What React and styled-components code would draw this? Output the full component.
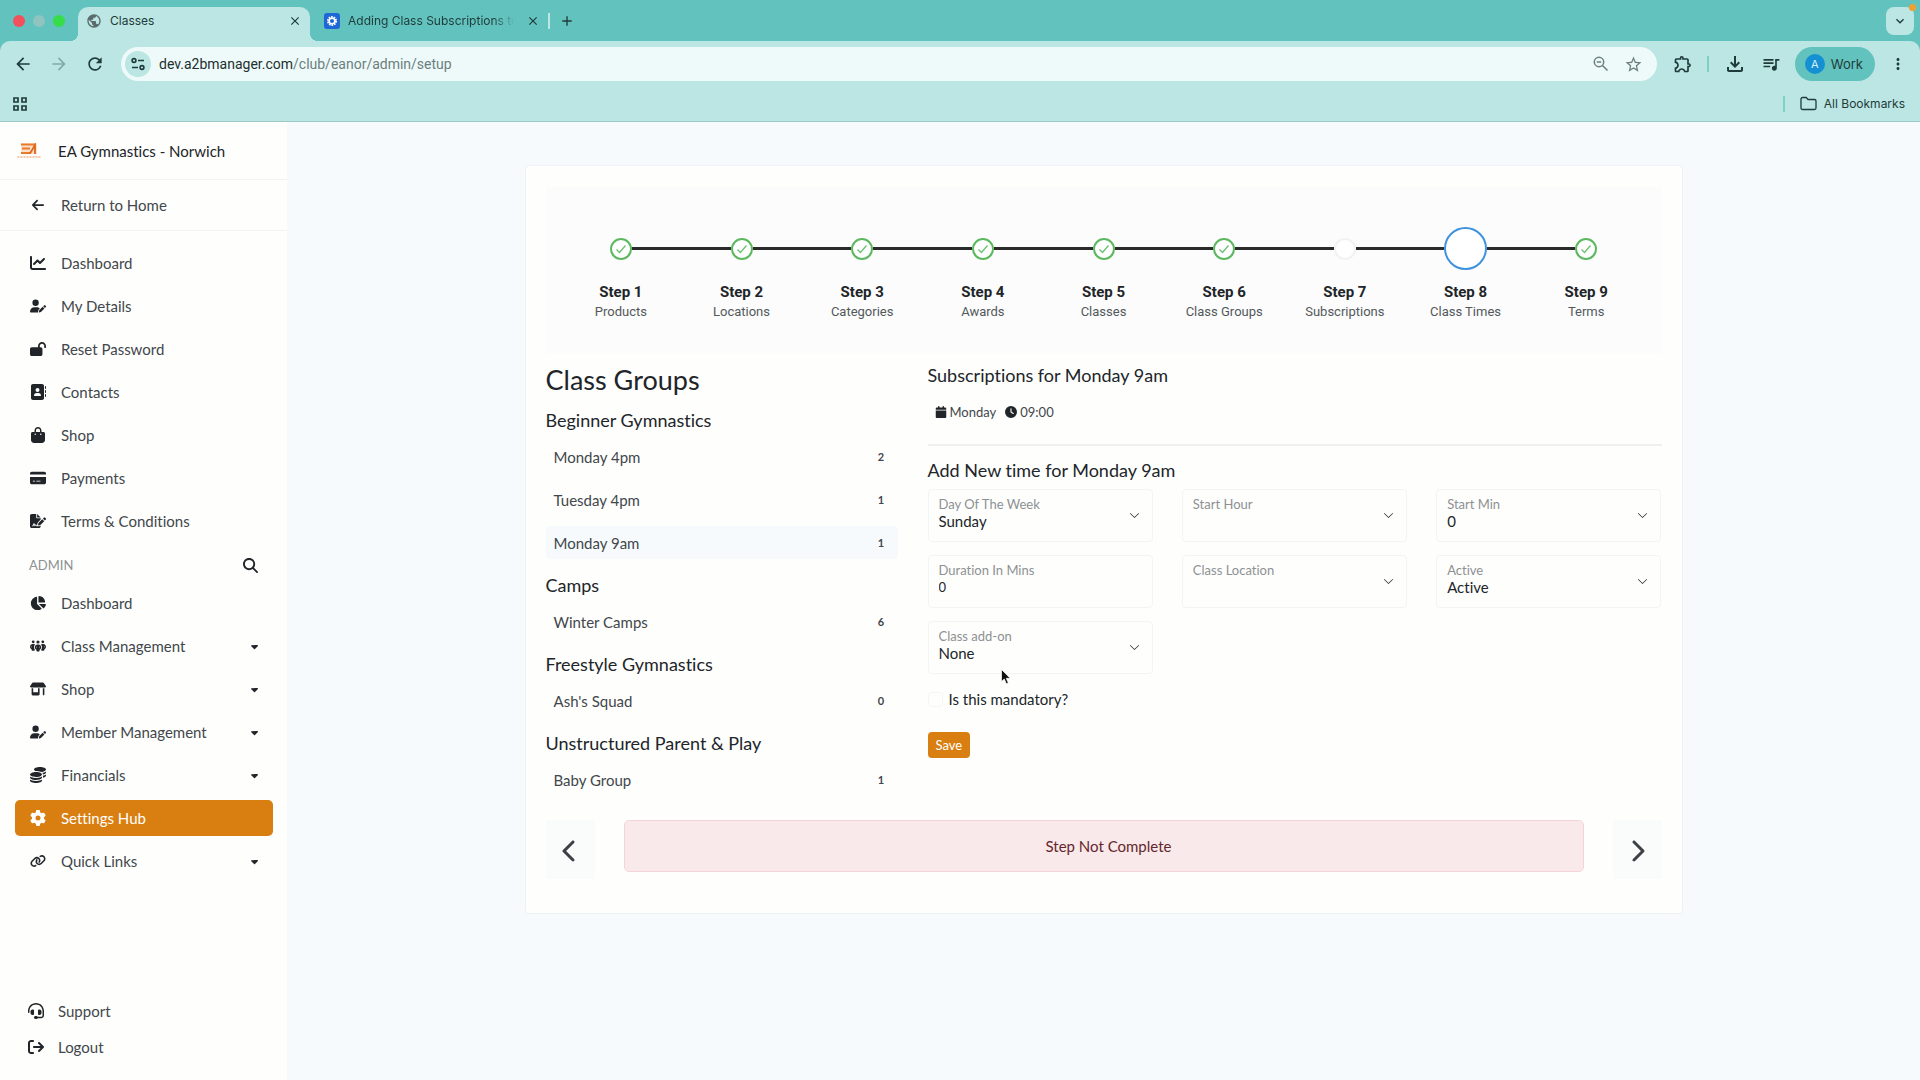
import React from "react";
import styled, { createGlobalStyle, css } from "styled-components";
import {
  FaAddressBook, FaArrowLeft, FaArrowRightFromBracket, FaBagShopping, FaCalendar, FaCaretDown,
  FaChartLine, FaChartPie, FaChevronLeft, FaChevronRight, FaClock, FaCoins, FaCreditCard,
  FaFileSignature, FaGear, FaHeadset, FaLink, FaLockOpen, FaMagnifyingGlass, FaPeopleGroup,
  FaShop, FaUserPen,
} from "react-icons/fa6";
import {
  MdAdd, MdArrowBack, MdArrowForward, MdClose, MdKeyboardArrowDown, MdMoreVert,
  MdOutlineExtension, MdOutlineFileDownload, MdPublic, MdQueueMusic, MdRefresh, MdStarBorder,
} from "react-icons/md";
import { BsChevronDown } from "react-icons/bs";

const color = {
  strip: "#62c2bd",
  toolbar: "#bbe6e3",
  omnibox: "#eefaf9",
  chromeInk: "#1f3b3a",
  ink: "#212529",
  text: "#42474b",
  muted: "#8d9193",
  accent: "#d97f11",
  page: "#f7fafc",
  surface: "#fefefd",
  line: "#f1f4f4",
};

const GlobalStyle = createGlobalStyle`
  *, *::before, *::after { box-sizing: border-box; }
  body {
    margin: 0;
    background: ${color.page};
    color: ${color.ink};
    font: 15px/20px Lato, sans-serif;
    font-variant-ligatures: none;
  }
  button, input, select { font: inherit; color: inherit; margin: 0; }
  button { border: 0; padding: 0; background: none; cursor: pointer; }
  a { color: inherit; text-decoration: none; }
  h1, h2, h3, ul, p { margin: 0; padding: 0; font-weight: 400; }
  ul { list-style: none; }
  svg { display: block; flex: none; }
`;

const Window = styled.div`
  min-height: 100vh;
  display: flex;
  flex-direction: column;
`;

/* ---------- browser frame ---------- */

const Browser = styled.header`
  background: ${color.strip};
  color: ${color.chromeInk};
  font-family: Inter, sans-serif;
  font-size: 12px;
`;

const TabStrip = styled.div`
  display: flex;
  align-items: flex-end;
  height: 41px;
  padding: 0 6px 0 13px;
`;

const Lights = styled.div`
  display: flex;
  gap: 8px;
  height: 41px;
  align-items: center;
  margin-right: 13px;
`;

const Light = styled.span`
  width: 12px;
  height: 12px;
  border-radius: 50%;
  background: ${(p) => p.$tone};
`;

const Tab = styled.div`
  position: relative;
  display: flex;
  align-items: center;
  gap: 8px;
  height: 34px;
  padding: 0 8px 6px;
  width: 232px;
  border-radius: 10px 10px 0 0;
  ${(p) =>
    p.$active &&
    css`
      background: ${color.toolbar};
      margin-right: 6px;
      &::before,
      &::after {
        content: "";
        position: absolute;
        bottom: 0;
        width: 8px;
        height: 8px;
      }
      &::before {
        left: -8px;
        background: radial-gradient(circle at 0 0, transparent 8px, ${color.toolbar} 8px);
      }
      &::after {
        right: -8px;
        background: radial-gradient(circle at 100% 0, transparent 8px, ${color.toolbar} 8px);
      }
    `}
`;

const TabTitle = styled.span`
  flex: 1;
  overflow: hidden;
  white-space: nowrap;
  ${(p) => p.$fade && "mask-image: linear-gradient(90deg, #000 85%, transparent 98%);"}
`;

const TabDivider = styled.span`
  width: 2px;
  height: 16px;
  margin: 0 9px 12px 0;
  background: ${color.toolbar};
`;

const NewTab = styled.button`
  align-self: center;
`;

const TabSearch = styled.button`
  position: relative;
  align-self: center;
  margin-left: auto;
  width: 28px;
  height: 28px;
  display: grid;
  place-items: center;
  border-radius: 8px;
  background: ${color.toolbar};
  &::after {
    content: "";
    position: absolute;
    top: -3px;
    right: -2px;
    width: 7px;
    height: 7px;
    border-radius: 50%;
    background: #f0a030;
  }
`;

const Toolbar = styled.div`
  display: flex;
  align-items: center;
  height: 46px;
  padding: 0 13px;
  gap: 16px;
  background: ${color.toolbar};
  border-radius: 10px 10px 0 0;
`;

const NavButton = styled.button`
  opacity: ${(p) => (p.$dim ? 0.35 : 1)};
`;

const Omnibox = styled.div`
  flex: 1;
  display: flex;
  align-items: center;
  gap: 8px;
  height: 34px;
  padding: 0 14px 0 4px;
  border-radius: 17px;
  background: ${color.omnibox};
  font-family: Roboto, sans-serif;
  font-size: 14px;
  color: #6b7f7e;
`;

const SiteInfo = styled.button`
  width: 26px;
  height: 26px;
  display: grid;
  place-items: center;
  border-radius: 50%;
  background: ${color.toolbar};
  color: ${color.chromeInk};
`;

const Url = styled.span`
  flex: 1;
  b { font-weight: 400; color: #1d2f2e; }
`;

const Actions = styled.div`
  display: flex;
  align-items: center;
  gap: 14px;
`;

const Rule = styled.span`
  width: 2px;
  height: 16px;
  background: #7fd0c4;
`;

const Profile = styled.button`
  display: flex;
  align-items: center;
  gap: 6px;
  height: 34px;
  padding: 0 12px 0 10px;
  border-radius: 17px;
  background: ${color.strip};
  font-size: 13px;
`;

const Avatar = styled.span`
  width: 20px;
  height: 20px;
  border-radius: 50%;
  background: #1590d3;
  color: #d9f1fb;
  font-size: 11px;
  text-align: center;
`;

const Bookmarks = styled.div`
  display: flex;
  align-items: center;
  justify-content: space-between;
  height: 35px;
  padding: 0 15px 1px 12px;
  background: ${color.toolbar};
  border-bottom: 1px solid #9ccac8;
`;

const BookmarkFolder = styled.button`
  display: flex;
  align-items: center;
  gap: 7px;
`;

const BookmarkEnd = styled.div`
  display: flex;
  align-items: center;
  gap: 15px;
`;

/* ---------- sidebar ---------- */

const Body = styled.div`
  flex: 1;
  display: flex;
`;

const Sidebar = styled.aside`
  flex: none;
  width: 287px;
  display: flex;
  flex-direction: column;
  background: ${color.surface};
  color: ${color.text};
`;

const Club = styled.div`
  display: flex;
  align-items: center;
  gap: 17px;
  height: 58px;
  padding-left: 17px;
  border-bottom: 1px solid ${color.line};
  color: ${color.ink};
`;

const Back = styled.div`
  padding: 7px 15px;
  border-bottom: 1px solid ${color.line};
`;

const Menu = styled.ul`
  display: flex;
  flex-direction: column;
  gap: ${(p) => (p.$tight ? 0 : 7)}px;
  padding: ${(p) => p.$pad};
  ${(p) => p.$bottom && "margin-top: auto;"}
`;

const MenuLink = styled.a`
  display: flex;
  align-items: center;
  gap: ${(p) => (p.$compact ? 12 : 13)}px;
  height: 36px;
  padding: 0 13px 0 ${(p) => (p.$compact ? 11 : 13)}px;
  border-radius: 5px;
  ${(p) => p.$active && `background: ${color.accent}; color: #fff;`}
`;

const IconSlot = styled.span`
  width: 20px;
  display: grid;
  place-items: center;
  color: ${(p) => (p.$active ? "#fff" : color.ink)};
`;

const MenuText = styled.span`
  flex: 1;
`;

const SectionHead = styled.div`
  display: flex;
  align-items: center;
  justify-content: space-between;
  height: 22px;
  margin: 15px 29px 9px;
  font-size: 13px;
  color: ${color.muted};
`;

const IconButton = styled.button`
  color: ${color.ink};
`;

/* ---------- content ---------- */

const Main = styled.main`
  flex: 1;
  min-width: 0;
  padding: 43px 24px;
`;

const Card = styled.section`
  max-width: 1158px;
  margin: 0 auto;
  padding: 21px 20px 34px;
  background: ${color.surface};
  border: 1px solid #edf2f4;
  border-radius: 4px;
`;

const Steps = styled.ol`
  display: flex;
  margin: 0;
  padding: 40px 15px 31px;
  list-style: none;
  background: #fbfcfb;
  font-family: Roboto, sans-serif;
  text-align: center;
`;

const Step = styled.li`
  flex: 1;
`;

const Track = styled.div`
  display: flex;
  align-items: center;
  height: 43px;
  margin-bottom: 12px;
`;

const Line = styled.span`
  flex: 1;
  height: 3px;
  background: ${(p) => (p.$hidden ? "transparent" : "#2b2b2b")};
`;

const Dot = styled.span`
  display: grid;
  place-items: center;
  border-radius: 50%;
  background: #fff;
  color: #6cc070;
  width: ${(p) => (p.$state === "current" ? 43 : 22)}px;
  height: ${(p) => (p.$state === "current" ? 43 : 22)}px;
  border: 2px solid
    ${(p) => ({ done: "#5cb85f", current: "#3f93dd", idle: "#f1f2f2" })[p.$state]};
`;

const StepName = styled.strong`
  display: block;
  font-size: 15px;
`;

const StepLabel = styled.span`
  display: block;
  font-size: 13px;
  color: #53585b;
`;

const Columns = styled.div`
  display: grid;
  grid-template-columns: repeat(12, minmax(0, 1fr));
  column-gap: 30px;
  margin-top: 9px;
`;

const Left = styled.div`
  grid-column: span 4;
`;

const Right = styled.div`
  grid-column: span 8;
`;

const Title = styled.h1`
  font-size: 27px;
  line-height: 36px;
  margin-bottom: 9px;
`;

const Heading = styled.h2`
  font-size: 18px;
  line-height: 26px;
`;

const Groups = styled.div`
  display: grid;
  gap: 13px;
`;

const Group = styled.div`
  display: grid;
  gap: 7px;
`;

const Rows = styled.div`
  display: grid;
  gap: 10px;
`;

const ClassRow = styled.button`
  display: flex;
  align-items: center;
  justify-content: space-between;
  height: 33px;
  padding: 0 8px;
  border-radius: 4px;
  color: ${color.text};
  background: ${(p) => (p.$active ? color.page : "none")};
`;

const Count = styled.span`
  min-width: 17px;
  font-size: 11px;
  font-weight: 700;
  text-align: center;
`;

const Slots = styled.div`
  display: flex;
  gap: 9px;
  padding: 14px 7px 22px;
  border-bottom: 2px solid #eff1f1;
  margin-bottom: 11px;
  font-size: 13px;
  color: ${color.text};
`;

const Slot = styled.span`
  display: flex;
  align-items: center;
  gap: 3px;
  svg { color: ${color.ink}; }
`;

const Fields = styled.div`
  display: grid;
  grid-template-columns: repeat(3, minmax(0, 1fr));
  gap: 13px 29px;
  margin-top: 6px;
`;

const FieldBox = styled.div`
  display: flex;
  align-items: center;
  height: 53px;
  padding: 0 12px 0 10px;
  border: 1px solid #f2f5f5;
  border-radius: 4px;
`;

const FieldInner = styled.div`
  flex: 1;
  min-width: 0;
  display: flex;
  flex-direction: column;
  padding-bottom: 5px;
`;

const FieldLabel = styled.label`
  font-size: 13px;
  line-height: 16px;
  color: ${color.muted};
`;

const control = css`
  width: 100%;
  height: 18px;
  padding: 0;
  border: 0;
  outline: 0;
  background: transparent;
  line-height: 18px;
`;

const Select = styled.select`
  ${control}
  appearance: none;
`;

const Input = styled.input`
  ${control}
  font-size: 13px;
`;

const Mandatory = styled.div`
  display: flex;
  align-items: center;
  gap: 6px;
  height: 20px;
  margin-top: 15px;
`;

const Check = styled.input`
  appearance: none;
  width: 15px;
  height: 15px;
  border: 1px solid #f4f6f6;
  border-radius: 4px;
`;

const Save = styled.button`
  height: 26px;
  margin-top: 23px;
  padding: 0 8px;
  border-radius: 4px;
  background: ${color.accent};
  color: #fff;
  font-size: 13px;
`;

const Footer = styled.div`
  display: flex;
  align-items: flex-start;
  gap: 29px;
  margin-top: 24px;
`;

const Pager = styled.button`
  width: 49px;
  height: 59px;
  padding-top: 2px;
  display: grid;
  place-items: center;
  background: #fafcfb;
  color: #3c4145;
`;

const Alert = styled.div`
  flex: 1;
  padding: 15px 15px 15px 25px;
  border: 1px solid #f3d5d8;
  border-radius: 5px;
  background: #f9e9ea;
  color: #63262c;
  text-align: center;
`;

const Pointer = styled.svg`
  position: absolute;
  left: 1001px;
  top: 669px;
  pointer-events: none;
`;

/* ---------- drawings ---------- */

const ClubLogo = () => (
  <svg width="24" height="16" viewBox="0 0 24 16" aria-hidden="true">
    <rect x="4" y="0.5" width="16" height="10.5" fill="#fbe0cb" />
    <path d="M4 1.500h14M5 5.500h8M4 10h10" stroke="#ea7a2c" strokeWidth="1.800" />
    <path d="M13 10.500 18 2v9" stroke="#e0641d" strokeWidth="1.800" fill="none" />
    <path d="M0.500 14h23" stroke="#f2b68c" strokeWidth="1.500" strokeDasharray="2 1" />
  </svg>
);

const TuneIcon = () => (
  <svg width="16" height="16" viewBox="0 0 16 16" fill="none" stroke="currentColor" strokeWidth="1.600" aria-hidden="true">
    <circle cx="4" cy="4.500" r="1.900" />
    <path d="M8 4.500h6M2 11.500h6" />
    <circle cx="12" cy="11.500" r="1.900" />
  </svg>
);

const ZoomOutIcon = () => (
  <svg width="18" height="18" viewBox="0 0 18 18" fill="none" stroke="currentColor" strokeWidth="1.500" aria-hidden="true">
    <circle cx="7" cy="7" r="4.700" />
    <path d="M10.500 10.500 15.500 15.500M4.800 7h4.400" />
  </svg>
);

const FolderIcon = () => (
  <svg width="17" height="15" viewBox="0 0 17 15" fill="none" stroke="currentColor" strokeWidth="1.300" aria-hidden="true">
    <path d="M1 3a1.500 1.500 0 0 1 1.500-1.500h3.700L8 3.500h6.500A1.500 1.500 0 0 1 16 5v7a1.500 1.500 0 0 1-1.500 1.500h-12A1.500 1.500 0 0 1 1 12z" />
  </svg>
);

const AppsIcon = () => (
  <svg width="16" height="16" viewBox="0 0 16 16" fill="none" stroke="currentColor" strokeWidth="1.700" aria-hidden="true">
    <path d="M2 2h4v4H2zM10 2h4v4h-4zM2 10h4v4H2zM10 10h4v4h-4z" />
  </svg>
);

const GearBadge = () => (
  <svg width="16" height="16" viewBox="0 0 16 16" aria-hidden="true">
    <rect width="16" height="16" rx="3" fill="#1f66d6" />
    <circle cx="8" cy="8" r="4" fill="none" stroke="#fff" strokeWidth="2" strokeDasharray="1.600 0.900" />
    <circle cx="8" cy="8" r="2.800" fill="none" stroke="#fff" strokeWidth="1.500" />
  </svg>
);

const Tick = () => (
  <svg width="12" height="12" viewBox="0 0 12 12" fill="none" stroke="currentColor" strokeWidth="1.300" aria-hidden="true">
    <path d="M1.500 6.500 4.500 9.500 10.500 2.500" />
  </svg>
);

/* ---------- data ---------- */

const mainMenu = [
  ["Dashboard", FaChartLine],
  ["My Details", FaUserPen],
  ["Reset Password", FaLockOpen],
  ["Contacts", FaAddressBook],
  ["Shop", FaBagShopping],
  ["Payments", FaCreditCard],
  ["Terms & Conditions", FaFileSignature],
];

const adminMenu = [
  ["Dashboard", FaChartPie],
  ["Class Management", FaPeopleGroup, true],
  ["Shop", FaShop, true],
  ["Member Management", FaUserPen, true],
  ["Financials", FaCoins, true],
  ["Settings Hub", FaGear, false, true],
  ["Quick Links", FaLink, true],
];

const steps = [
  ["Products", "done"],
  ["Locations", "done"],
  ["Categories", "done"],
  ["Awards", "done"],
  ["Classes", "done"],
  ["Class Groups", "done"],
  ["Subscriptions", "idle"],
  ["Class Times", "current"],
  ["Terms", "done"],
];

const groups = [
  ["Beginner Gymnastics", [["Monday 4pm", 2], ["Tuesday 4pm", 1], ["Monday 9am", 1, true]]],
  ["Camps", [["Winter Camps", 6]]],
  ["Freestyle Gymnastics", [["Ash's Squad", 0]]],
  ["Unstructured Parent & Play", [["Baby Group", 1]]],
];

const fields = [
  ["day", "Day Of The Week", "Sunday"],
  ["hour", "Start Hour", ""],
  ["min", "Start Min", "0"],
  ["duration", "Duration In Mins", "0", true],
  ["location", "Class Location", ""],
  ["active", "Active", "Active"],
  ["addon", "Class add-on", "None"],
];

function MenuItem({ label, icon: Icon, caret, active, compact }) {
  return (
    <li>
      <MenuLink href="#" $active={active} $compact={compact}>
        <IconSlot $active={active}><Icon size={16} /></IconSlot>
        <MenuText>{label}</MenuText>
        {caret && <FaCaretDown size={11} color={color.ink} />}
      </MenuLink>
    </li>
  );
}

function Field({ id, label, value, isText }) {
  return (
    <FieldBox>
      <FieldInner>
        <FieldLabel htmlFor={id}>{label}</FieldLabel>
        {isText ? (
          <Input id={id} defaultValue={value} />
        ) : (
          <Select id={id} defaultValue={value}>
            <option>{value}</option>
          </Select>
        )}
      </FieldInner>
      {!isText && <BsChevronDown size={11} />}
    </FieldBox>
  );
}

export default function App() {
  return (
    <Window>
      <GlobalStyle />
      <Browser>
        <TabStrip>
          <Lights>
            <Light $tone="#f2505a" />
            <Light $tone="#8fc4bf" />
            <Light $tone="#36dd49" />
          </Lights>
          <Tab $active>
            <MdPublic size={16} color="#5b6b6c" />
            <TabTitle>Classes</TabTitle>
            <button aria-label="Close Classes"><MdClose size={14} /></button>
          </Tab>
          <Tab>
            <GearBadge />
            <TabTitle $fade>Adding Class Subscriptions to</TabTitle>
            <button aria-label="Close Adding Class Subscriptions"><MdClose size={14} /></button>
          </Tab>
          <TabDivider />
          <NewTab aria-label="New tab"><MdAdd size={16} /></NewTab>
          <TabSearch aria-label="Search tabs"><MdKeyboardArrowDown size={16} /></TabSearch>
        </TabStrip>
        <Toolbar>
          <NavButton aria-label="Back"><MdArrowBack size={20} /></NavButton>
          <NavButton aria-label="Forward" $dim><MdArrowForward size={20} /></NavButton>
          <NavButton aria-label="Reload"><MdRefresh size={20} /></NavButton>
          <Omnibox>
            <SiteInfo aria-label="Site information"><TuneIcon /></SiteInfo>
            <Url><b>dev.a2bmanager.com</b>/club/eanor/admin/setup</Url>
            <Actions>
              <button aria-label="Zoom"><ZoomOutIcon /></button>
              <button aria-label="Bookmark this page"><MdStarBorder size={19} /></button>
            </Actions>
          </Omnibox>
          <Actions>
            <button aria-label="Extensions"><MdOutlineExtension size={20} /></button>
            <Rule />
            <button aria-label="Downloads"><MdOutlineFileDownload size={24} /></button>
            <button aria-label="Media"><MdQueueMusic size={20} /></button>
            <Profile><Avatar>A</Avatar>Work</Profile>
            <button aria-label="Menu"><MdMoreVert size={18} /></button>
          </Actions>
        </Toolbar>
        <Bookmarks>
          <button aria-label="Apps"><AppsIcon /></button>
          <BookmarkEnd>
            <Rule />
            <BookmarkFolder><FolderIcon />All Bookmarks</BookmarkFolder>
          </BookmarkEnd>
        </Bookmarks>
      </Browser>

      <Body>
        <Sidebar>
          <Club><ClubLogo />EA Gymnastics - Norwich</Club>
          <Back>
            <MenuLink href="#">
              <IconSlot><FaArrowLeft size={14} /></IconSlot>
              <MenuText>Return to Home</MenuText>
            </MenuLink>
          </Back>
          <Menu $pad="14px 14px 0 15px">
            {mainMenu.map(([label, icon]) => <MenuItem key={label} label={label} icon={icon} />)}
          </Menu>
          <SectionHead>
            ADMIN
            <IconButton aria-label="Search"><FaMagnifyingGlass size={15} /></IconButton>
          </SectionHead>
          <Menu $pad="0 14px 0 15px">
            {adminMenu.map(([label, icon, caret, active]) => (
              <MenuItem key={label} label={label} icon={icon} caret={caret} active={active} />
            ))}
          </Menu>
          <Menu $tight $bottom $pad="0 14px 15px 15px">
            <MenuItem compact label="Support" icon={FaHeadset} />
            <MenuItem compact label="Logout" icon={FaArrowRightFromBracket} />
          </Menu>
        </Sidebar>

        <Main>
          <Card>
            <Steps>
              {steps.map(([label, state], i) => (
                <Step key={label}>
                  <Track>
                    <Line $hidden={i === 0} />
                    <Dot $state={state}>{state === "done" && <Tick />}</Dot>
                    <Line $hidden={i === steps.length - 1} />
                  </Track>
                  <StepName>Step {i + 1}</StepName>
                  <StepLabel>{label}</StepLabel>
                </Step>
              ))}
            </Steps>

            <Columns>
              <Left>
                <Title>Class Groups</Title>
                <Groups>
                  {groups.map(([name, rows]) => (
                    <Group key={name}>
                      <Heading>{name}</Heading>
                      <Rows>
                        {rows.map(([row, count, active]) => (
                          <ClassRow key={row} $active={active}>
                            {row}
                            <Count>{count}</Count>
                          </ClassRow>
                        ))}
                      </Rows>
                    </Group>
                  ))}
                </Groups>
              </Left>

              <Right>
                <Heading>Subscriptions for Monday 9am</Heading>
                <Slots>
                  <Slot><FaCalendar size={12} />Monday</Slot>
                  <Slot><FaClock size={12} />09:00</Slot>
                </Slots>
                <Heading>Add New time for Monday 9am</Heading>
                <Fields>
                  {fields.map(([id, label, value, isText]) => (
                    <Field key={id} id={id} label={label} value={value} isText={isText} />
                  ))}
                </Fields>
                <Mandatory>
                  <Check type="checkbox" id="mandatory" />
                  <label htmlFor="mandatory">Is this mandatory?</label>
                </Mandatory>
                <Save>Save</Save>
              </Right>
            </Columns>

            <Footer>
              <Pager aria-label="Previous step"><FaChevronLeft size={24} /></Pager>
              <Alert role="status">Step Not Complete</Alert>
              <Pager aria-label="Next step"><FaChevronRight size={24} /></Pager>
            </Footer>
          </Card>
        </Main>
      </Body>

      <Pointer width="10" height="16" viewBox="0 0 10 16" aria-hidden="true">
        <path d="M0.500 0.500v12l2.800-2.500 2 4.800 2-.9-2-4.600h3.900z" fill="#111" stroke="#fff" strokeWidth="0.700" />
      </Pointer>
    </Window>
  );
}
